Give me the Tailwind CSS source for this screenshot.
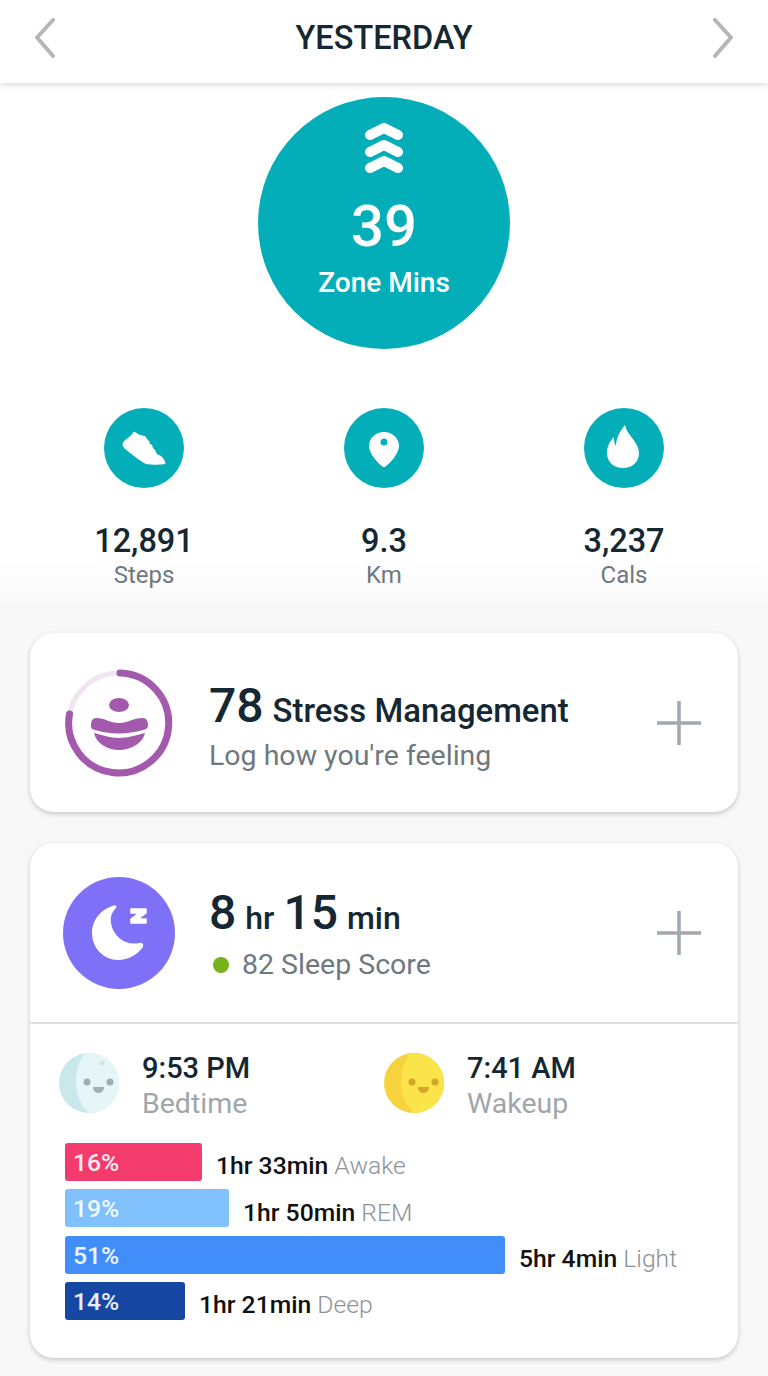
<!DOCTYPE html>
<html lang="en">
<head>
    <meta charset="UTF-8">
    <meta name="viewport" content="width=device-width, initial-scale=1.0">
    <title>Yesterday</title>
    <script src="https://cdn.jsdelivr.net/npm/@tailwindcss/browser@4"></script>
</head>
<body class="font-['Roboto',sans-serif] text-[#152733]">
<div class="w-[768px] h-[1376px] overflow-hidden bg-[linear-gradient(#ffffff_0,#ffffff_560px,#f8f8f8_610px)]">

    <header class="h-[83px] bg-white shadow-[0_2px_6px_rgba(0,0,0,0.14)] flex items-center justify-between px-[34px] pb-[7px]">
        <svg width="22" height="40" viewBox="0 0 22 40" fill="none"><path d="M19 2 3 19.500 19 38" stroke="#b4b6b7" stroke-width="4" stroke-linecap="round" stroke-linejoin="round"/></svg>
        <h1 class="text-[32.500px] leading-[40px] font-medium">YESTERDAY</h1>
        <svg width="22" height="40" viewBox="0 0 22 40" fill="none"><path d="M3 2 19 19.500 3 38" stroke="#b4b6b7" stroke-width="4" stroke-linecap="round" stroke-linejoin="round"/></svg>
    </header>

    <section class="mt-[14px] mx-auto size-[252px] rounded-full bg-[#04aeb8] text-white flex flex-col items-center pt-[26px]">
        <svg width="40" height="52" viewBox="0 0 40 52" fill="none" stroke="#fff" stroke-width="10" stroke-linecap="round" stroke-linejoin="round">
            <path d="M6 12 20 5 34 12"/>
            <path d="M6 29 20 22 34 29"/>
            <path d="M6 45 20 38 34 45"/>
        </svg>
        <p class="text-[58px] leading-[64px] mt-[19px] font-medium">39</p>
        <p class="text-[28px] leading-[34px] mt-[8px] font-medium">Zone Mins</p>
    </section>

    <section class="mt-[59px] px-[24px] grid grid-cols-3">
        <div class="flex flex-col items-center">
            <svg class="size-[80px]" viewBox="0 0 80 80">
                <circle cx="40" cy="40" r="40" fill="#04aeb8"/>
                <path fill="#fff" d="M30 23.500 36 27 41 28 43 31 45 33 46 36 48 37 49 40 51 42 53 46C57 48 61 50 61.500 56 55 57 48 57 42 56 36 53 26 45 20 40 18 38 18 35 20 33 24 30 28 27 30 23.500Z"/>
            </svg>
            <p class="text-[32.500px] leading-[38px] mt-[34px] font-medium">12,891</p>
            <p class="text-[24px] leading-[28px] mt-[1px] text-[#6f787e]">Steps</p>
        </div>
        <div class="flex flex-col items-center">
            <svg class="size-[80px]" viewBox="0 0 80 80">
                <circle cx="40" cy="40" r="40" fill="#04aeb8"/>
                <path fill="#fff" fill-rule="evenodd" d="M40 24C48 24 55 30 55 38 55 46 46 55 41 59L39 59C34 55 25 46 25 38 25 30 32 24 40 24ZM40 30.500A3.500 3.500 0 1 0 40 37.500 3.500 3.500 0 1 0 40 30.500Z"/>
            </svg>
            <p class="text-[32.500px] leading-[38px] mt-[34px] font-medium">9.3</p>
            <p class="text-[24px] leading-[28px] mt-[1px] text-[#6f787e]">Km</p>
        </div>
        <div class="flex flex-col items-center">
            <svg class="size-[80px]" viewBox="0 0 80 80">
                <circle cx="40" cy="40" r="40" fill="#04aeb8"/>
                <path fill="#fff" d="M41 17C42 26 55 34 55 45 55 54 48 60 39 60 30 60 23 54 23 45 23 38 26 33 30 29 30 32 30 35 32 38 32 30 36 23 41 17Z"/>
            </svg>
            <p class="text-[32.500px] leading-[38px] mt-[34px] font-medium">3,237</p>
            <p class="text-[24px] leading-[28px] mt-[1px] text-[#6f787e]">Cals</p>
        </div>
    </section>

    <article class="mt-[44px] mx-[30px] h-[179px] bg-white rounded-[24px] shadow-[0_2px_5px_rgba(0,0,0,0.2)] flex items-center pl-[33px] pr-[36px]">
        <svg width="112" height="112" viewBox="0 0 112 112" fill="none" class="shrink-0">
            <circle cx="56" cy="56" r="50" stroke="#f0e4f1" stroke-width="5"/>
            <path d="M57 6A50 50 0 1 1 6.500 47" stroke="#a359ac" stroke-width="7" stroke-linecap="round"/>
            <ellipse cx="56" cy="38" rx="10" ry="7" fill="#a359ac"/>
            <path d="M33 51C42 51 47 56 56 56 65 56 70 51 80 51 84 51 85 55 85 58 85 61 84 62 80 63 72 65 65 66.500 56 66.500 47 66.500 40 65 32 63 28 62 28 61 28 58 28 55 29 51 33 51Z" fill="#a359ac"/>
            <path d="M31 66C40 68 47 71 56 71 65 71 73 68 82 66 80 76 68 83 56 83 44 83 33 76 31 66Z" fill="#a359ac"/>
        </svg>
        <div class="ml-[34px] pt-[5px]">
            <p class="leading-[56px] flex items-baseline gap-[9px] font-medium"><span class="text-[48px]">78</span><span class="text-[32.900px]">Stress Management</span></p>
            <p class="text-[28.500px] leading-[34px] text-[#6f787e]">Log how you're feeling</p>
        </div>
        <svg width="46" height="46" viewBox="0 0 46 46" class="ml-auto shrink-0" fill="none"><path d="M23 1V45M1 23H45" stroke="#a2a8ab" stroke-width="3.500"/></svg>
    </article>

    <article class="mt-[31px] mx-[30px] h-[515px] bg-white rounded-[24px] shadow-[0_2px_5px_rgba(0,0,0,0.2)]">
        <div class="h-[181px] border-b-2 border-[#dcdedf] flex items-center pl-[33px] pr-[36px]">
            <svg width="112" height="112" viewBox="0 0 112 112" class="shrink-0">
                <circle cx="56" cy="56" r="56" fill="#7f71f7"/>
                <path fill="#fff" d="M51 28.500C38 32 29 43 29 56 29 71 41 83 55 83 65 83 74 78 80 70 81 67 79 65 76 66 63 69 50 60 48 46 47 40 49 35 53 31 54 29 53 28 51 28.500Z"/>
                <path fill="#fff" stroke="#fff" stroke-width="1.500" stroke-linejoin="round" d="M68 32H83V36L75 42H83V46H68V42L76 36H68Z"/>
            </svg>
            <div class="ml-[34px] pt-[2px]">
                <p class="leading-[56px] flex items-baseline gap-[9px] font-medium"><span class="text-[48px]">8</span><span class="text-[32px]">hr</span><span class="text-[48px]">15</span><span class="text-[32px]">min</span></p>
                <p class="text-[28.500px] leading-[34px] mt-[2px] text-[#6f787e] flex items-center"><span class="size-[16px] rounded-full bg-[#76b21c] ml-[4px] mr-[13px]"></span>82 Sleep Score</p>
            </div>
            <svg width="46" height="46" viewBox="0 0 46 46" class="ml-auto shrink-0" fill="none"><path d="M23 1V45M1 23H45" stroke="#a2a8ab" stroke-width="3.500"/></svg>
        </div>

        <div class="flex items-start mt-[27px] pl-[29px]">
            <div class="w-[325px] flex items-start">
                <svg width="60" height="60" viewBox="0 0 60 60" class="shrink-0 mt-[2px]">
                    <circle cx="30" cy="30" r="30" fill="#c9e8ea"/>
                    <path d="M26 .3A30 30 0 1 1 30 60C22 52 17 42 17 30 17 18 20 8 26 .3Z" fill="#e6f5f5"/>
                    <circle cx="43" cy="10" r="2.500" fill="#d3e3e4"/>
                    <circle cx="28" cy="29" r="3.500" fill="#9fb0b2"/><circle cx="51" cy="29" r="3.500" fill="#9fb0b2"/>
                    <path d="M34 34H45C45 38 42 40 39.500 40 37 40 34 38 34 34Z" fill="#9fb0b2"/>
                </svg>
                <div class="ml-[23px]">
                    <p class="text-[29px] leading-[34px] font-medium">9:53 PM</p>
                    <p class="text-[28.500px] leading-[34px] mt-[2px] text-[#a0a6a9]">Bedtime</p>
                </div>
            </div>
            <div class="flex items-start">
                <svg width="60" height="60" viewBox="0 0 60 60" class="shrink-0 mt-[2px]">
                    <circle cx="30" cy="30" r="30" fill="#f6d33e"/>
                    <path d="M26 .3A30 30 0 1 1 30 60C22 52 17 42 17 30 17 18 20 8 26 .3Z" fill="#fbe34a"/>
                    <circle cx="28" cy="29" r="3.500" fill="#d3a62c"/><circle cx="51" cy="29" r="3.500" fill="#d3a62c"/>
                    <path d="M34 34H45C45 38 42 40 39.500 40 37 40 34 38 34 34Z" fill="#d3a62c"/>
                </svg>
                <div class="ml-[23px]">
                    <p class="text-[29px] leading-[34px] font-medium">7:41 AM</p>
                    <p class="text-[28.500px] leading-[34px] mt-[2px] text-[#a0a6a9]">Wakeup</p>
                </div>
            </div>
        </div>

        <div class="mt-[22px] pl-[35px] flex flex-col gap-[8.300px] text-[24.700px]">
            <div class="flex items-center h-[38px]">
                <div class="w-[137px] h-full rounded-[3px] bg-[#f43b6e] text-white/90 pl-[8px] pt-[1px] leading-[38px] font-medium">16%</div>
                <p class="ml-[14px] pt-[8px] text-[#111] font-medium">1hr 33min <span class="font-light text-[#8d9396]">Awake</span></p>
            </div>
            <div class="flex items-center h-[38px]">
                <div class="w-[164px] h-full rounded-[3px] bg-[#7fc0fd] text-white/90 pl-[8px] pt-[1px] leading-[38px] font-medium">19%</div>
                <p class="ml-[14px] pt-[8px] text-[#111] font-medium">1hr 50min <span class="font-light text-[#8d9396]">REM</span></p>
            </div>
            <div class="flex items-center h-[38px]">
                <div class="w-[440px] h-full rounded-[3px] bg-[#418dfa] text-white/90 pl-[8px] pt-[1px] leading-[38px] font-medium">51%</div>
                <p class="ml-[14px] pt-[8px] text-[#111] font-medium">5hr 4min <span class="font-light text-[#8d9396]">Light</span></p>
            </div>
            <div class="flex items-center h-[38px]">
                <div class="w-[120px] h-full rounded-[3px] bg-[#1547a3] text-white/90 pl-[8px] pt-[1px] leading-[38px] font-medium">14%</div>
                <p class="ml-[14px] pt-[8px] text-[#111] font-medium">1hr 21min <span class="font-light text-[#8d9396]">Deep</span></p>
            </div>
        </div>
    </article>
</div>
</body>
</html>
